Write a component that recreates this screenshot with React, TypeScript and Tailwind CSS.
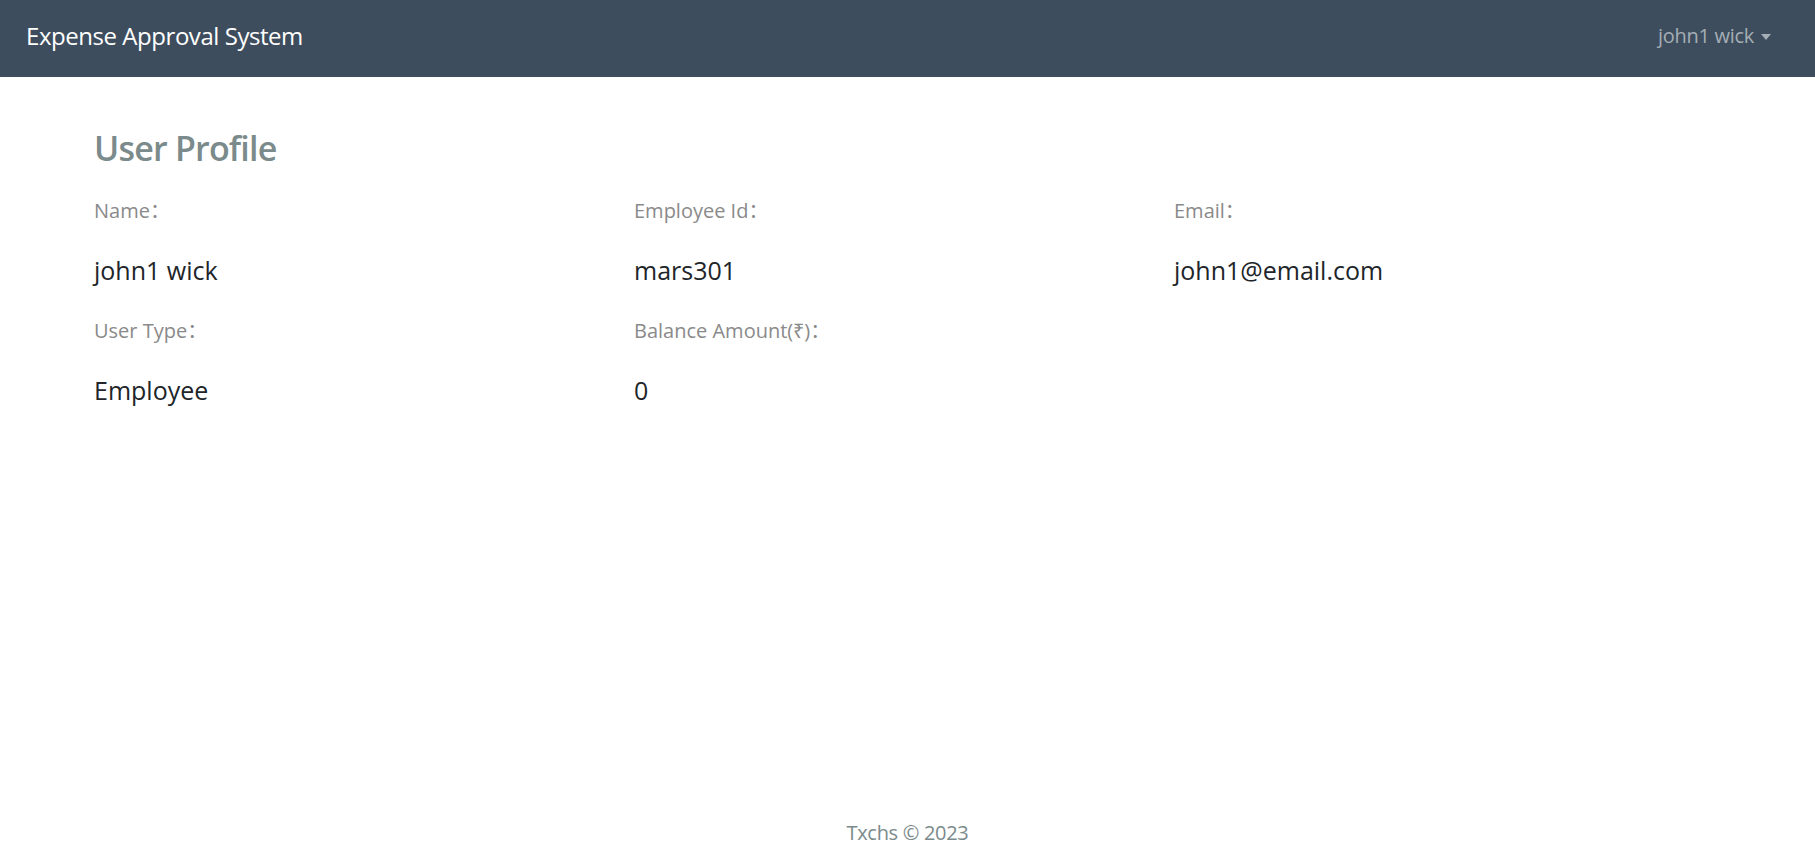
import { useState } from "react";

interface ProfileField {
  label: string;
  value: string;
}

const fields: ProfileField[] = [
  { label: "Name", value: "john1 wick" },
  { label: "Employee Id", value: "mars301" },
  { label: "Email", value: "john1@email.com" },
  { label: "User Type", value: "Employee" },
  { label: "Balance Amount(₹)", value: "0" },
];

function Navbar({ userName }: { userName: string }) {
  const [open, setOpen] = useState(false);

  return (
    <nav className="flex h-[77px] items-center justify-between bg-[#3d4d5d] pb-[6px] pl-[26px] pr-[44px]">
      <a href="#" className="text-[24px] leading-[37.5px] tracking-[-0.45px] text-white">
        Expense Approval System
      </a>
      <button
        type="button"
        onClick={() => setOpen(!open)}
        className="flex items-center text-[20px] leading-[30px] tracking-[-0.3px] text-[#a5adb5]">
        {userName}
        <span className="ml-[7px] mt-[2px] h-0 w-0 border-x-[5px] border-t-[6px] border-x-transparent border-t-[#a5adb5]"></span>
      </button>
    </nav>
  );
}

export default function App() {
  return (
    <div className="flex min-h-screen flex-col bg-white font-['Open_Sans','Noto_Sans_CJK_SC',sans-serif]">
      <Navbar userName="john1 wick" />

      <main className="flex-1 pl-[94px] pr-[101px] pt-[50px]">
        <h3 className="text-[34px] font-semibold leading-[42px] tracking-[-0.8px] text-[#7b8a8b]">User Profile</h3>
        <div className="mt-[27px] grid grid-cols-3 gap-y-[26px]">
          {fields.map((field) => (
            <div key={field.label} className="flex flex-col gap-[26px]">
              <span className="text-[20px] leading-[30px] text-[#8a8a8a]">{field.label}：</span>
              <span className="text-[25px] leading-[37.5px] text-[#212529]">{field.value}</span>
            </div>
          ))}
        </div>
      </main>

      <footer className="pb-[12px] text-center text-[20px] leading-[30px] tracking-[-0.3px] text-[#7b8a8b]">
        Txchs © 2023
      </footer>
    </div>
  );
}
